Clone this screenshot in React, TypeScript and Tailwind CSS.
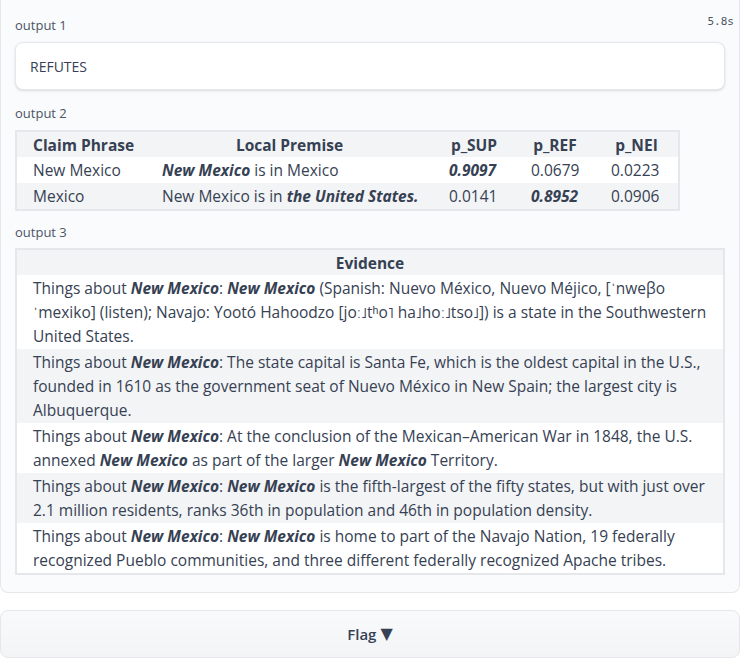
import React from 'react';

const B = ({ children }: { children: React.ReactNode }) => (
  <b className="font-bold italic">{children}</b>
);

const premiseRows = [
  {
    phrase: 'New Mexico',
    premise: (
      <>
        <B>New Mexico</B> is in Mexico
      </>
    ),
    sup: '0.9097',
    ref: '0.0679',
    nei: '0.0223',
    best: 'sup',
  },
  {
    phrase: 'Mexico',
    premise: (
      <>
        New Mexico is in <B>the United States.</B>
      </>
    ),
    sup: '0.0141',
    ref: '0.8952',
    nei: '0.0906',
    best: 'ref',
  },
];

const evidence: React.ReactNode[] = [
  <>
    Things about <B>New Mexico</B>: <B>New Mexico</B> (Spanish: Nuevo México, Nuevo Méjico, [ˈnweβo ˈmexiko] (listen);
    Navajo: Yootó Hahoodzo [joː˩tʰo˥ ha˩hoː˩tso˩]) is a state in the Southwestern United States.
  </>,
  <>
    Things about <B>New Mexico</B>: The state capital is Santa Fe, which is the oldest capital in the U.S., founded in
    1610 as the government seat of Nuevo México in New Spain; the largest city is Albuquerque.
  </>,
  <>
    Things about <B>New Mexico</B>: At the conclusion of the Mexican–American War in 1848, the U.S. annexed{' '}
    <B>New Mexico</B> as part of the larger <B>New Mexico</B> Territory.
  </>,
  <>
    Things about <B>New Mexico</B>: <B>New Mexico</B> is the fifth-largest of the fifty states, but with just over 2.1
    million residents, ranks 36th in population and 46th in population density.
  </>,
  <>
    Things about <B>New Mexico</B>: <B>New Mexico</B> is home to part of the Navajo Nation, 19 federally recognized
    Pueblo communities, and three different federally recognized Apache tribes.
  </>,
];

const cols = 'grid grid-cols-[129px_287px_82px_80px_83px]';

function Label({ children }: { children: React.ReactNode }) {
  return <div className="text-[13px] leading-[18px] text-gray-600">{children}</div>;
}

export default function App() {
  return (
    <div className="w-[740px] h-[665px] bg-white font-['Open_Sans',sans-serif] text-gray-700 overflow-hidden">
      <div className="h-[593px] rounded-b-lg border border-t-0 border-gray-200 bg-[#fafbfc] px-[14px] pt-[16px]">
        {/* output 1 */}
        <div className="flex items-start justify-between">
          <Label>output 1</Label>
          <span className="-mr-[9px] -mt-[2px] font-['DejaVu_Sans_Mono',monospace] text-[11px] text-gray-600">5.8s</span>
        </div>
        <div className="mt-[8px] flex h-[48px] items-center rounded-lg border border-gray-200 bg-white px-[14px] text-[14px] text-gray-700 shadow-sm">
          REFUTES
        </div>

        {/* output 2 */}
        <div className="mt-[14px]">
          <Label>output 2</Label>
        </div>
        <div className="mt-[8px] w-[665px] border-2 border-gray-200 text-[15.5px] leading-[24px] whitespace-nowrap">
          <div className={`${cols} bg-gray-100 font-bold`}>
            <div className="pl-4 pt-px">Claim Phrase</div>
            <div className="px-4 pt-px text-center">Local Premise</div>
            <div className="px-2 pt-px text-center">p_SUP</div>
            <div className="px-2 pt-px text-center">p_REF</div>
            <div className="px-2 pt-px text-center">p_NEI</div>
          </div>
          {premiseRows.map((r, i) => (
            <div key={i} className={`${cols} ${i % 2 ? 'bg-gray-100' : 'bg-white'}`}>
              <div className="pl-4 py-px">{r.phrase}</div>
              <div className="pl-4 py-px">{r.premise}</div>
              <div className="pl-4 py-px">{r.best === 'sup' ? <B>{r.sup}</B> : r.sup}</div>
              <div className="pl-4 py-px">{r.best === 'ref' ? <B>{r.ref}</B> : r.ref}</div>
              <div className="pl-4 py-px">{r.nei}</div>
            </div>
          ))}
        </div>

        {/* output 3 */}
        <div className="mt-[12px]">
          <Label>output 3</Label>
        </div>
        <div className="mt-[7px] border-2 border-gray-200 text-[15.5px] leading-[24px]">
          <div className="bg-gray-100 px-4 pt-px text-center font-bold">Evidence</div>
          {evidence.map((e, i) => (
            <div key={i} className={`px-4 py-px ${i % 2 ? 'bg-gray-100' : 'bg-white'}`}>
              {e}
            </div>
          ))}
        </div>
      </div>

      <button className="mt-[17px] flex h-[48px] w-full items-center justify-center gap-1 rounded-lg border border-gray-200 bg-gradient-to-b from-gray-50 to-gray-100 text-[15px] font-semibold text-gray-700">
        Flag <span className="font-['DejaVu_Sans',sans-serif] text-[16px]">▼</span>
      </button>
    </div>
  );
}
